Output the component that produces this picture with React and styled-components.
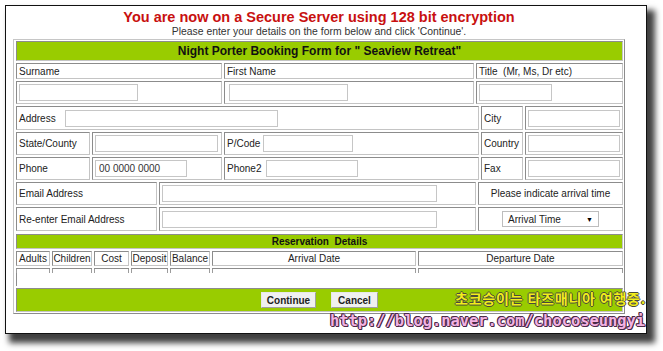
import React from "react";
import styled, { createGlobalStyle } from "styled-components";

const GlobalStyle = createGlobalStyle`
  html, body {
    margin: 0;
    padding: 0;
    background: #fff;
  }
  body {
    font-family: "Liberation Sans", Arial, sans-serif;
  }
`;

const Stage = styled.div`
  position: relative;
  width: 663px;
  height: 351px;
  overflow: hidden;
  background: #fff;
  padding: 5px 0 0 5px;
  box-sizing: border-box;
`;

const Page = styled.div`
  width: 642px;
  height: 329px;
  box-sizing: border-box;
  border: 1px solid #111;
  background: #fff;
  box-shadow: 6px 7px 6px 2px rgba(0, 0, 0, 0.75);
  padding: 3px 0 0 7px;
`;

const Content = styled.div`
  width: 612px;
`;

const Title = styled.h1`
  margin: 0;
  text-align: center;
  font-size: 14.5px;
  line-height: 16px;
  font-weight: bold;
  color: #c81010;
`;

const Subtitle = styled.p`
  margin: 0;
  text-align: center;
  font-size: 10.4px;
  line-height: 14px;
  color: #333;
`;

const FormTable = styled.div`
  box-sizing: border-box;
  width: 612px;
  border: 1px solid;
  border-color: #c6c6c6 #8c8c8c #8c8c8c #c6c6c6;
  padding: 1px 1px 1px 2px;
  display: flex;
  flex-direction: column;
  gap: 2px;
`;

const Row = styled.div`
  display: flex;
  gap: 2px;
  height: ${(p) => p.$h}px;
`;

const Cell = styled.div`
  box-sizing: border-box;
  border: 1px solid;
  border-color: #8c8c8c #c4c4c4 #c4c4c4 #8c8c8c;
  display: flex;
  align-items: center;
  justify-content: ${(p) => (p.$center ? "center" : "flex-start")};
  padding: 0 2px;
  font-size: 10px;
  color: #222;
  white-space: nowrap;
  width: ${(p) => (p.$w ? `${p.$w}px` : "auto")};
  flex: ${(p) => (p.$w ? "none" : "1")};
`;

const GreenBar = styled(Cell)`
  background: #99cc00;
  justify-content: center;
  font-weight: bold;
  color: #111;
  font-size: ${(p) => p.$size || 10}px;
`;

const Label = styled.span`
  width: ${(p) => p.$w}px;
  flex: none;
`;

const TextInput = styled.input`
  box-sizing: border-box;
  width: ${(p) => p.$w}px;
  height: 17px;
  margin: 0;
  padding: 0 3px;
  border: 1px solid #c6c6c6;
  background: #fff;
  font-family: "Liberation Sans", Arial, sans-serif;
  font-size: 10px;
  color: #333;
  outline: none;
`;

const SelectBox = styled.div`
  box-sizing: border-box;
  width: 97px;
  height: 16px;
  border: 1px solid #bdbdbd;
  background: #fff;
  display: flex;
  align-items: center;
  justify-content: space-between;
  padding: 0 5px;
  font-size: 10px;
  color: #222;
`;

const Arrow = styled.span`
  font-size: 7px;
  color: #000;
`;

const DataCell = styled.div`
  position: relative;
  box-sizing: border-box;
  border-top: 1px solid #8c8c8c;
  width: ${(p) => (p.$w ? `${p.$w}px` : "auto")};
  flex: ${(p) => (p.$w ? "none" : "1")};
  border-left: ${(p) => (p.$first ? "1px solid #8c8c8c" : "none")};

  &::before,
  &::after {
    content: "";
    position: absolute;
    top: 0;
    width: 1px;
    height: 4px;
    background: #9c9c9c;
  }
  &::before {
    left: ${(p) => (p.$first ? "-1px" : "0")};
  }
  &::after {
    right: 0;
  }
`;

const ButtonBar = styled.div`
  box-sizing: border-box;
  height: 24px;
  border: 1px solid;
  border-color: #8c8c8c #c4c4c4 #c4c4c4 #8c8c8c;
  background: #99cc00;
  display: flex;
  align-items: center;
  justify-content: center;
  gap: 15px;
`;

const Button = styled.button`
  box-sizing: border-box;
  height: 16px;
  width: ${(p) => p.$w}px;
  padding: 0;
  border: 1px solid;
  border-color: #e8e8e8 #a0a0a0 #a0a0a0 #e8e8e8;
  background: #f0f0f0;
  font-family: "Liberation Sans", Arial, sans-serif;
  font-size: 10px;
  font-weight: bold;
  color: #222;
`;

const KoreanMark = styled.div`
  position: absolute;
  left: 455px;
  top: 289px;
  font-family: "Noto Sans CJK KR", sans-serif;
  font-weight: bold;
  font-size: 14px;
  letter-spacing: 0.8px;
  line-height: 18px;
  color: #f2ee1a;
  text-shadow: -1px 0 #4a4a3a, 1px 0 #4a4a3a, 0 -1px #4a4a3a, 0 1px #4a4a3a;
  white-space: nowrap;
`;

const UrlMark = styled.div`
  position: absolute;
  left: 330px;
  top: 312px;
  font-family: "DejaVu Sans Mono", monospace;
  font-weight: bold;
  font-size: 15.4px;
  line-height: 19px;
  color: #f2b2e2;
  text-shadow: -1px 0 #4a2a46, 1px 0 #4a2a46, 0 -1px #4a2a46, 0 1px #4a2a46,
    1px 1px #4a2a46, -1px -1px #4a2a46;
  white-space: nowrap;
`;

const resColumns = [
  { name: "Adults", w: 34 },
  { name: "Children", w: 40 },
  { name: "Cost", w: 35 },
  { name: "Deposit", w: 37 },
  { name: "Balance", w: 40 },
  { name: "Arrival Date", w: 204 },
  { name: "Departure Date" },
];

export default function App() {
  return (
    <Stage>
      <GlobalStyle />
      <Page>
        <Content>
          <Title>You are now on a Secure Server using 128 bit encryption</Title>
          <Subtitle>
            Please enter your details on the form below and click 'Continue'.
          </Subtitle>
          <FormTable>
            <Row $h={20}>
              <GreenBar $size={12} style={{ flex: 1 }}>
                Night Porter Booking Form for " Seaview Retreat"
              </GreenBar>
            </Row>

            <Row $h={16}>
              <Cell $w={206}>Surname</Cell>
              <Cell $w={250}>First Name</Cell>
              <Cell>Title&nbsp; (Mr, Ms, Dr etc)</Cell>
            </Row>

            <Row $h={23}>
              <Cell $w={206}>
                <TextInput $w={119} />
              </Cell>
              <Cell $w={250}>
                <TextInput $w={119} style={{ marginLeft: 2 }} />
              </Cell>
              <Cell>
                <TextInput $w={73} />
              </Cell>
            </Row>

            <Row $h={24}>
              <Cell $w={463}>
                <Label $w={46}>Address</Label>
                <TextInput $w={213} />
              </Cell>
              <Cell $w={42}>City</Cell>
              <Cell>
                <TextInput $w={92} />
              </Cell>
            </Row>

            <Row $h={23}>
              <Cell $w={74}>State/County</Cell>
              <Cell $w={130}>
                <TextInput $w={123} />
              </Cell>
              <Cell $w={255}>
                <Label $w={36}>P/Code</Label>
                <TextInput $w={90} />
              </Cell>
              <Cell $w={42}>Country</Cell>
              <Cell>
                <TextInput $w={92} />
              </Cell>
            </Row>

            <Row $h={23}>
              <Cell $w={74}>Phone</Cell>
              <Cell $w={130}>
                <TextInput $w={92} defaultValue="00 0000 0000" />
              </Cell>
              <Cell $w={255}>
                <Label $w={39}>Phone2</Label>
                <TextInput $w={92} />
              </Cell>
              <Cell $w={42}>Fax</Cell>
              <Cell>
                <TextInput $w={92} />
              </Cell>
            </Row>

            <Row $h={23}>
              <Cell $w={141}>Email Address</Cell>
              <Cell $w={317}>
                <TextInput $w={275} />
              </Cell>
              <Cell $center>Please indicate arrival time</Cell>
            </Row>

            <Row $h={24}>
              <Cell $w={141}>Re-enter Email Address</Cell>
              <Cell $w={317}>
                <TextInput $w={275} />
              </Cell>
              <Cell $center>
                <SelectBox>
                  <span>Arrival Time</span>
                  <Arrow>▼</Arrow>
                </SelectBox>
              </Cell>
            </Row>

            <Row $h={15} style={{ marginTop: 1 }}>
              <GreenBar style={{ flex: 1 }}>Reservation&nbsp; Details</GreenBar>
            </Row>

            <Row $h={15}>
              {resColumns.map((c) => (
                <Cell key={c.name} $w={c.w} $center>
                  {c.name}
                </Cell>
              ))}
            </Row>

            <Row $h={18}>
              {resColumns.map((c, i) => (
                <DataCell key={c.name} $w={c.w} $first={i === 0} />
              ))}
            </Row>

            <ButtonBar>
              <Button $w={55}>Continue</Button>
              <Button $w={47}>Cancel</Button>
            </ButtonBar>
          </FormTable>
        </Content>
      </Page>
      <KoreanMark>초코승이는 타즈매니아 여행중.</KoreanMark>
      <UrlMark>http://blog.naver.com/chocoseungyi</UrlMark>
    </Stage>
  );
}
